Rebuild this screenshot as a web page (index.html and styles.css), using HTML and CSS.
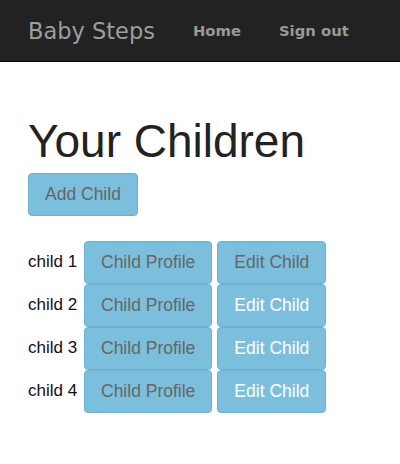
FILE: index.html
```html
<!DOCTYPE html>
<html>
<head>
<meta charset="utf-8">
<link rel="stylesheet" href="styles.css">
</head>
<body>
<nav class="navbar">
  <span class="brand">Baby Steps</span>
  <a class="nav-link">Home</a>
  <a class="nav-link">Sign out</a>
</nav>
<main class="container">
  <h1 class="title">Your Children</h1>
  <button class="btn">Add Child</button>
  <div class="list">
    <div class="row"><span class="label">child 1</span><button class="btn">Child Profile</button><button class="btn">Edit Child</button></div>
    <div class="row"><span class="label">child 2</span><button class="btn">Child Profile</button><button class="btn btn-white">Edit Child</button></div>
    <div class="row"><span class="label">child 3</span><button class="btn">Child Profile</button><button class="btn btn-white">Edit Child</button></div>
    <div class="row"><span class="label">child 4</span><button class="btn">Child Profile</button><button class="btn btn-white">Edit Child</button></div>
  </div>
</main>
</body>
</html>
```
FILE: styles.css
```css
html, body { margin: 0; padding: 0; background: #fff; }
body { font-family: "Liberation Sans", Arial, sans-serif; color: #222; }
.navbar {
  height: 62px;
  background: #222;
  border-bottom: 1px solid #080808;
  box-sizing: border-box;
  display: flex;
  align-items: center;
  padding-left: 28px;
  font-family: "DejaVu Sans", Verdana, sans-serif;
}
.brand { color: #9d9d9d; font-size: 22.5px; margin-right: 38px; }
.nav-link { color: #999; font-size: 14.8px; font-weight: bold; margin-right: 38px; }
.container { padding: 0 28px; }
.title {
  font-size: 46px;
  font-weight: normal;
  margin: 53px 0 6px 0;
  line-height: 52px;
  color: #222;
}
.btn {
  font-family: "Liberation Sans", Arial, sans-serif;
  font-size: 17.5px;
  line-height: 23px;
  padding: 9px 16px;
  background: #7bbfdd;
  border: 1px solid #6ab3d4;
  border-radius: 4px;
  color: #666;
  box-sizing: border-box;
  height: 43px;
  margin: 0;
}
.btn-white { color: #fff; }
.list { margin-top: 25px; }
.row { display: flex; align-items: center; gap: 5px; }
.label { font-size: 17px; color: #111; margin-right: 1px; margin-top: -2px; width: 50px; }
```
